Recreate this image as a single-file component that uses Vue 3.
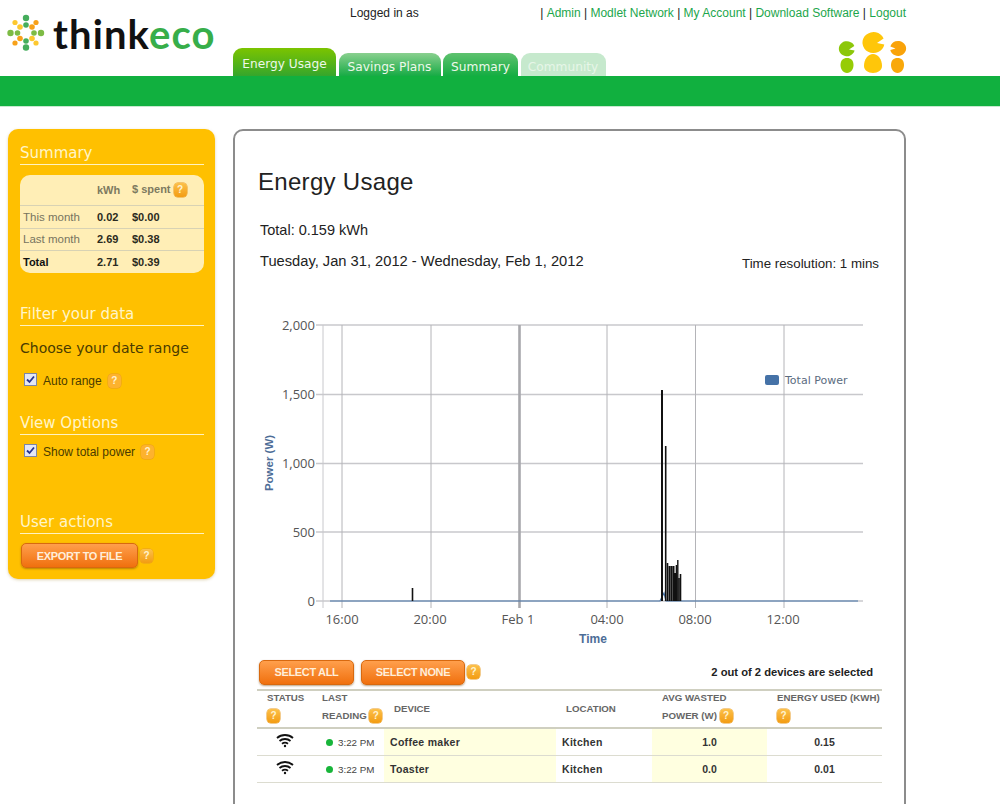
<template>
  <div class="page">
    <header class="head">
      <div class="logo">
        <svg class="logo-mark" width="38" height="38" viewBox="7 14 38 38">
          <circle v-for="d in logoDots" :key="d.x + '-' + d.y" :cx="d.x" :cy="d.y" :r="d.r" :fill="d.c" />
        </svg>
        <span class="logo-text">think<em>eco</em></span>
      </div>
      <div class="head-main">
        <div class="top-links">
          <span class="logged">Logged in as</span>
          <nav class="links">
            <template v-for="(l, i) in links" :key="l">
              <span class="sep">{{ i ? '&nbsp;|&nbsp;' : '|&nbsp;' }}</span><a href="#">{{ l }}</a>
            </template>
          </nav>
        </div>
        <div class="tab-row">
          <div class="tabs">
            <a v-for="t in tabs" :key="t.name" href="#" class="tab" :class="t.cls">{{ t.name }}</a>
          </div>
          <svg class="mascot" width="70" height="44" viewBox="837 30 70 44">
            <path d="M854.300 46 A8 7.500 0 1 0 854.600 50.500 L849 49.500 Z" fill="#8cc70a" />
            <path d="M840.500 65 C840.500 60.500 843 58 847 58 C851 58 853.500 60.500 853.500 65 C853.500 69 851 73 847 73 C843 73 840.500 69 840.500 65 Z" fill="#96cc05" />
            <path d="M883.600 38.500 A11 10.500 0 1 0 884.300 44.500 L877 43 Z" fill="#ffc60a" />
            <path d="M864 66 C864 59 868 54 873 54 C878 54 882 59 882 66 C882 70 878 73 873 73 C868 73 864 70 864 66 Z" fill="#ffc60a" />
            <path d="M890.400 46.500 A8 7.500 0 1 1 890.300 50 L895.500 48.500 Z" fill="#f9a30a" />
            <path d="M891 65 C891 60.500 893.500 58 897.500 58 C901.500 58 904 60.500 904 65 C904 69 901.500 73 897.500 73 C893.500 73 891 69 891 65 Z" fill="#f9a80a" />
          </svg>
        </div>
      </div>
    </header>
    <div class="bar"></div>

    <div class="content">
      <aside class="side">
        <h3 class="side-title">Summary</h3>
        <table class="sum">
          <thead>
            <tr>
              <th></th>
              <th>kWh</th>
              <th>$ spent <span class="help">?</span></th>
            </tr>
          </thead>
          <tbody>
            <tr v-for="r in summary" :key="r.label" :class="{ total: r.total }">
              <td class="lbl">{{ r.label }}</td>
              <td>{{ r.kwh }}</td>
              <td>{{ r.spent }}</td>
            </tr>
          </tbody>
        </table>

        <h3 class="side-title filter">Filter your data</h3>
        <p class="range">Choose your date range</p>
        <label class="check first">
          <span class="box"><svg width="9" height="9" viewBox="0 0 9 9"><path d="M1 4.500 L3.500 7 L8 1.500" fill="none" stroke="#26348f" stroke-width="1.800" /></svg></span>
          Auto range <span class="help">?</span>
        </label>

        <h3 class="side-title view">View Options</h3>
        <label class="check">
          <span class="box"><svg width="9" height="9" viewBox="0 0 9 9"><path d="M1 4.500 L3.500 7 L8 1.500" fill="none" stroke="#26348f" stroke-width="1.800" /></svg></span>
          Show total power <span class="help">?</span>
        </label>

        <h3 class="side-title actions">User actions</h3>
        <div class="export">
          <button class="orange export-btn">EXPORT TO FILE</button>
          <span class="help">?</span>
        </div>
      </aside>

      <main class="card">
        <h1 class="title">Energy Usage</h1>
        <p class="total-line">Total: 0.159 kWh</p>
        <div class="date-row">
          <span class="dates">Tuesday, Jan 31, 2012 - Wednesday, Feb 1, 2012</span>
          <span class="resolution">Time resolution: 1 mins</span>
        </div>

        <svg class="chart" width="640" height="350" viewBox="250 299 640 350">
          <line v-for="y in hLines" :key="y" x1="316" :y1="y" x2="863" :y2="y" stroke="#c8c8cc" stroke-width="1.400" />
          <line v-for="v in vLines" :key="v.x" :x1="v.x" y1="325" :x2="v.x" y2="608" :stroke="v.c" :stroke-width="v.w" />
          <text v-for="t in yTicks" :key="t.label" x="315" :y="t.y" text-anchor="end" class="tick">{{ t.label }}</text>
          <text v-for="t in xTicks" :key="t.label" :x="t.x" y="624" text-anchor="middle" class="tick">{{ t.label }}</text>
          <text x="593" y="643" text-anchor="middle" class="axis">Time</text>
          <text transform="translate(273 463) rotate(-90)" text-anchor="middle" class="axis small">Power (W)</text>
          <path d="M330 601 L660 601 L664 593 L666 601 L858 601" fill="none" stroke="#4572a7" stroke-width="1.200" />
          <line v-for="s in spikes" :key="s.x" :x1="s.x" :y1="s.y" :x2="s.x" y2="601" stroke="#111" :stroke-width="s.w" />
          <rect x="765" y="375" width="14" height="10" rx="2" fill="#4572a7" />
          <text x="785" y="384" class="legend">Total Power</text>
        </svg>

        <div class="select-row">
          <button class="orange sel-all">SELECT ALL</button>
          <button class="orange sel-none">SELECT NONE</button>
          <span class="help">?</span>
          <span class="sel-count">2 out of 2 devices are selected</span>
        </div>

        <table class="devices">
          <colgroup>
            <col style="width: 61px" />
            <col style="width: 66px" />
            <col style="width: 172px" />
            <col style="width: 96px" />
            <col style="width: 115px" />
            <col style="width: 115px" />
          </colgroup>
          <thead>
            <tr>
              <th><div class="two">STATUS<br /><span class="help">?</span></div></th>
              <th class="last"><div class="two">LAST<br />READING <span class="help">?</span></div></th>
              <th>DEVICE</th>
              <th>LOCATION</th>
              <th><div class="two">AVG WASTED<br />POWER (W) <span class="help">?</span></div></th>
              <th><div class="two">ENERGY USED (KWH)<br /><span class="help">?</span></div></th>
            </tr>
          </thead>
          <tbody>
            <tr v-for="d in devices" :key="d.name">
              <td class="wifi">
                <svg width="18" height="15" viewBox="0 0 18 15">
                  <path d="M1 5 C5.500 1 12.500 1 17 5" fill="none" stroke="#111" stroke-width="1.800" />
                  <path d="M3.500 8 C6.500 5.300 11.500 5.300 14.500 8" fill="none" stroke="#111" stroke-width="1.800" />
                  <path d="M6 10.800 C7.700 9.400 10.300 9.400 12 10.800" fill="none" stroke="#111" stroke-width="1.800" />
                  <circle cx="9" cy="13" r="1.200" fill="#111" />
                </svg>
              </td>
              <td class="time"><span class="dot"></span>{{ d.time }}</td>
              <td class="hl name">{{ d.name }}</td>
              <td class="name">{{ d.location }}</td>
              <td class="hl num">{{ d.wasted }}</td>
              <td class="num">{{ d.used }}</td>
            </tr>
          </tbody>
        </table>
      </main>
    </div>
  </div>
</template>

<script setup>
const links = ['Admin', 'Modlet Network', 'My Account', 'Download Software', 'Logout']

const tabs = [
  { name: 'Energy Usage', cls: 'active' },
  { name: 'Savings Plans', cls: 'savings' },
  { name: 'Summary', cls: 'summary' },
  { name: 'Community', cls: 'off' }
]

const green = '#7dbb45'
const yellow = '#fdc82f'
const orange = '#f7a11a'
const logoDots = [
  { x: 26, y: 18, r: 3.200, c: '#45ad5c' },
  { x: 26, y: 25, r: 2.800, c: '#45ad5c' },
  { x: 26, y: 41, r: 2.800, c: '#45ad5c' },
  { x: 26, y: 47.500, r: 3.200, c: '#45ad5c' },
  { x: 10.500, y: 33, r: 3.200, c: green },
  { x: 17.500, y: 33, r: 2.800, c: green },
  { x: 34, y: 33, r: 2.800, c: green },
  { x: 41, y: 33, r: 3.200, c: green },
  { x: 15, y: 22.500, r: 2.600, c: yellow },
  { x: 20, y: 27, r: 2.800, c: yellow },
  { x: 36, y: 22.500, r: 2.600, c: orange },
  { x: 32, y: 27, r: 2.800, c: orange },
  { x: 15, y: 43, r: 2.600, c: orange },
  { x: 20, y: 38.500, r: 2.800, c: orange },
  { x: 36, y: 43, r: 2.600, c: yellow },
  { x: 32, y: 38.500, r: 2.800, c: yellow }
]

const summary = [
  { label: 'This month', kwh: '0.02', spent: '$0.00' },
  { label: 'Last month', kwh: '2.69', spent: '$0.38' },
  { label: 'Total', kwh: '2.71', spent: '$0.39', total: true }
]

const hLines = [325, 394.500, 463.500, 532, 601]
const vLines = [
  { x: 323, c: '#c8c8cc', w: 1 },
  { x: 342, c: '#b4b4b8', w: 1 },
  { x: 431, c: '#b4b4b8', w: 1 },
  { x: 519.500, c: '#a8a8ac', w: 2.600 },
  { x: 607, c: '#b4b4b8', w: 1 },
  { x: 695.500, c: '#b4b4b8', w: 1 },
  { x: 784, c: '#b4b4b8', w: 1 }
]
const yTicks = [
  { label: '2,000', y: 330 },
  { label: '1,500', y: 399 },
  { label: '1,000', y: 468 },
  { label: '500', y: 537 },
  { label: '0', y: 606 }
]
const xTicks = [
  { label: '16:00', x: 342 },
  { label: '20:00', x: 430 },
  { label: 'Feb 1', x: 518 },
  { label: '04:00', x: 607 },
  { label: '08:00', x: 695 },
  { label: '12:00', x: 783 }
]
const spikes = [
  { x: 412.500, y: 588, w: 1.600 },
  { x: 662, y: 390, w: 2 },
  { x: 665.700, y: 446, w: 1.600 },
  { x: 667.500, y: 563, w: 1.600 },
  { x: 669.500, y: 566, w: 2 },
  { x: 671.500, y: 566, w: 2 },
  { x: 673.500, y: 566, w: 2 },
  { x: 675, y: 573, w: 2 },
  { x: 676.500, y: 565, w: 1.600 },
  { x: 677.800, y: 560, w: 1.400 },
  { x: 679, y: 578, w: 1.600 },
  { x: 680.500, y: 574, w: 1.600 }
]

const devices = [
  { name: 'Coffee maker', location: 'Kitchen', time: '3:22 PM', wasted: '1.0', used: '0.15' },
  { name: 'Toaster', location: 'Kitchen', time: '3:22 PM', wasted: '0.0', used: '0.01' }
]
</script>

<style>
html, body {
  margin: 0;
  background: #fff;
}
</style>

<style scoped>
.page {
  width: 1000px;
  height: 804px;
  overflow: hidden;
  background: #fff;
  font-family: "Liberation Sans", Arial, sans-serif;
  color: #222;
}

.head {
  display: flex;
  height: 76px;
}
.logo {
  width: 233px;
  display: flex;
  align-items: flex-start;
  padding: 14px 0 0 7px;
  box-sizing: border-box;
}
.logo-text {
  font-family: Lato, sans-serif;
  font-weight: 700;
  font-size: 40px;
  line-height: 40px;
  color: #111;
  margin-left: 8px;
  letter-spacing: 1.100px;
}
.logo-text em {
  font-style: normal;
  color: #37ae4a;
}
.head-main {
  width: 673px;
  display: flex;
  flex-direction: column;
  justify-content: space-between;
}
.top-links {
  display: flex;
  justify-content: space-between;
  padding: 6px 0 0 117px;
  font-size: 12px;
  line-height: 14px;
}
.logged {
  color: #222;
}
.links {
  color: #222;
}
.links a {
  color: #1ca64c;
  text-decoration: none;
}
.tab-row {
  display: flex;
  justify-content: space-between;
  align-items: flex-end;
}
.mascot {
  display: block;
  margin-bottom: 2px;
  margin-right: -1px;
}
.tabs {
  display: flex;
  align-items: flex-end;
  gap: 2.500px;
}
.tab {
  display: block;
  height: 23px;
  line-height: 28px;
  text-align: center;
  box-sizing: border-box;
  border-radius: 9px 9px 0 0;
  font-family: "DejaVu Sans", Verdana, sans-serif;
  font-size: 12.200px;
  color: #eef8ea;
  text-decoration: none;
}
.tab.active {
  width: 103px;
  height: 28px;
  line-height: 33px;
  background: linear-gradient(#7cc400, #35a62c);
}
.tab.savings {
  width: 102px;
  background: linear-gradient(#8ad08f, #17ab45);
}
.tab.summary {
  width: 75px;
  background: linear-gradient(#5fc26f, #14ad42);
}
.tab.off {
  width: 85px;
  background: #c6e9cd;
  color: #e6f6e8;
}

.bar {
  height: 30px;
  background: #11b03f;
  border-bottom: 1px solid #c7e9cf;
}

.content {
  display: flex;
  align-items: flex-start;
  padding: 22px 0 0 8px;
  gap: 18px;
}

.side {
  width: 207px;
  height: 450px;
  box-sizing: border-box;
  padding: 15px 11px 0 12px;
  background: #ffc000;
  border-radius: 10px;
  box-shadow: 0 1px 3px rgba(160, 130, 40, 0.35);
}
.side-title {
  margin: 0;
  font-family: "DejaVu Sans", Verdana, sans-serif;
  font-weight: 400;
  font-size: 15px;
  line-height: 19px;
  color: #fff5c8;
  border-bottom: 1px solid #fff3c0;
  padding-bottom: 1px;
}
.side-title.filter {
  margin-top: 32px;
}
.side-title.view {
  margin-top: 25px;
}
.side-title.actions {
  margin-top: 53px;
}
.sum {
  width: 184px;
  margin-top: 10px;
  border-collapse: separate;
  border-spacing: 0;
  background: #ffeeb6;
  border-radius: 10px;
  font-size: 11px;
}
.sum th {
  height: 31px;
  padding: 0;
  text-align: left;
  color: #7d7a60;
  font-weight: 700;
  border-bottom: 1px solid #d8d2b4;
  box-sizing: border-box;
}
.sum th:nth-child(1) { width: 77px; }
.sum th:nth-child(2) { width: 35px; }
.sum td {
  height: 22px;
  padding: 0 0 1px;
  font-weight: 700;
  color: #2a2a20;
  border-bottom: 1px solid #d8d2b4;
  box-sizing: border-box;
}
.sum tbody tr:first-child td {
  height: 23px;
}
.sum tr:last-child td {
  border-bottom: 0;
}
.sum td.lbl {
  padding-left: 3px;
  font-size: 11.500px;
  font-weight: 400;
  color: #77745f;
}
.sum .total td.lbl {
  font-size: 11px;
  font-weight: 700;
  color: #111;
}
.range {
  margin: 13px 0 0;
  font-family: "DejaVu Sans", Verdana, sans-serif;
  font-size: 14px;
  line-height: 18px;
  color: #4a3b00;
}
.check {
  display: flex;
  align-items: center;
  gap: 6px;
  margin: 9px 0 0 4px;
  font-size: 12px;
  line-height: 16px;
  color: #4a3b00;
}
.check.first {
  margin-top: 16px;
}
.box {
  width: 11px;
  height: 11px;
  border: 1px solid #7c86a8;
  background: #e4e7f4;
  display: flex;
  align-items: center;
  justify-content: center;
  margin-top: -3px;
}
.help {
  display: inline-block;
  width: 13px;
  height: 14px;
  line-height: 14px;
  text-align: center;
  vertical-align: middle;
  border-radius: 4px;
  background: linear-gradient(#fcc04a, #f39c12);
  box-shadow: 0 0 0 0.5px #e79a20;
  color: #fff3d0;
  font-family: "Liberation Sans", Arial, sans-serif;
  font-size: 10px;
  font-weight: 700;
  letter-spacing: 0;
}
.check .help {
  background: #fdb22e;
}
.export {
  display: flex;
  align-items: center;
  gap: 2px;
  margin: 9px 0 0 1px;
}
.orange {
  border: 1px solid #d8690f;
  border-radius: 5px;
  background: linear-gradient(#ff9f4c, #f0700e);
  box-shadow: 0 1px 2px rgba(120, 70, 10, 0.5);
  color: #ffeeda;
  font-family: "Liberation Sans", Arial, sans-serif;
  font-weight: 700;
  font-size: 11px;
  letter-spacing: -0.350px;
  padding: 0;
  height: 25px;
}
.export-btn {
  width: 117px;
}

.card {
  width: 673px;
  height: 800px;
  box-sizing: border-box;
  border: 2px solid #8c8c8c;
  border-radius: 10px 10px 0 0;
  padding: 0 0 0 23px;
}
.title {
  margin: 36px 0 0;
  font-weight: 400;
  font-size: 24px;
  line-height: 30px;
  letter-spacing: 0.300px;
  color: #222;
}
.total-line {
  margin: 24px 0 0 2px;
  font-size: 14.500px;
  line-height: 18px;
}
.date-row {
  display: flex;
  justify-content: space-between;
  align-items: flex-end;
  margin: 12px 25px 0 2px;
}
.dates {
  font-size: 14.700px;
  line-height: 20px;
}
.resolution {
  font-size: 13.300px;
  line-height: 16px;
  margin-bottom: -1px;
}
.chart {
  display: block;
  margin: 28px 0 0 -8px;
  font-family: "Open Sans", sans-serif;
}
.tick {
  font-size: 13px;
  fill: #555;
}
.axis {
  font-family: "Liberation Sans", Arial, sans-serif;
  font-weight: 700;
  font-size: 12px;
  fill: #4d6d97;
}
.axis.small {
  font-size: 11.500px;
}
.legend {
  font-family: "DejaVu Sans", Verdana, sans-serif;
  font-size: 11px;
  fill: #5b6c80;
}
.select-row {
  display: flex;
  align-items: center;
  margin: 10px 31px 0 1px;
  height: 26px;
}
.sel-all {
  width: 95px;
}
.sel-none {
  width: 104px;
  margin: 0 2px 0 7px;
}
.sel-count {
  margin-left: auto;
  font-size: 11.200px;
  font-weight: 700;
  color: #222;
}
.devices {
  width: 625px;
  margin: 4px 0 0 -1px;
  table-layout: fixed;
  border-collapse: collapse;
  font-size: 10.500px;
}
.devices thead tr {
  border-top: 2px solid #cfcfc0;
  border-bottom: 2px solid #cfcfc0;
}
.devices th {
  height: 36px;
  padding: 0 0 0 10px;
  text-align: left;
  font-size: 9.700px;
  font-weight: 700;
  color: #666;
  line-height: 18px;
  white-space: nowrap;
}
.devices th.last {
  padding-left: 4px;
}
.two {
  margin: -2px 0 2px;
}
.devices td {
  height: 26px;
  padding: 0;
  border-bottom: 1px solid #dcdcd0;
}
.devices .wifi {
  text-align: center;
  padding-right: 6px;
}
.devices .wifi svg {
  display: block;
  margin: -3px auto 0;
}
.devices .time {
  padding-left: 8px;
  color: #444;
  font-size: 9.800px;
  white-space: nowrap;
}
.dot {
  display: inline-block;
  width: 7px;
  height: 7px;
  border-radius: 50%;
  background: #18b53a;
  margin-right: 5px;
}
.devices .hl {
  background: #ffffe0;
}
.devices .name {
  padding-left: 6px;
  font-weight: 700;
  color: #333;
  letter-spacing: 0.300px;
}
.devices .num {
  text-align: center;
  font-weight: 700;
  color: #333;
}
</style>
